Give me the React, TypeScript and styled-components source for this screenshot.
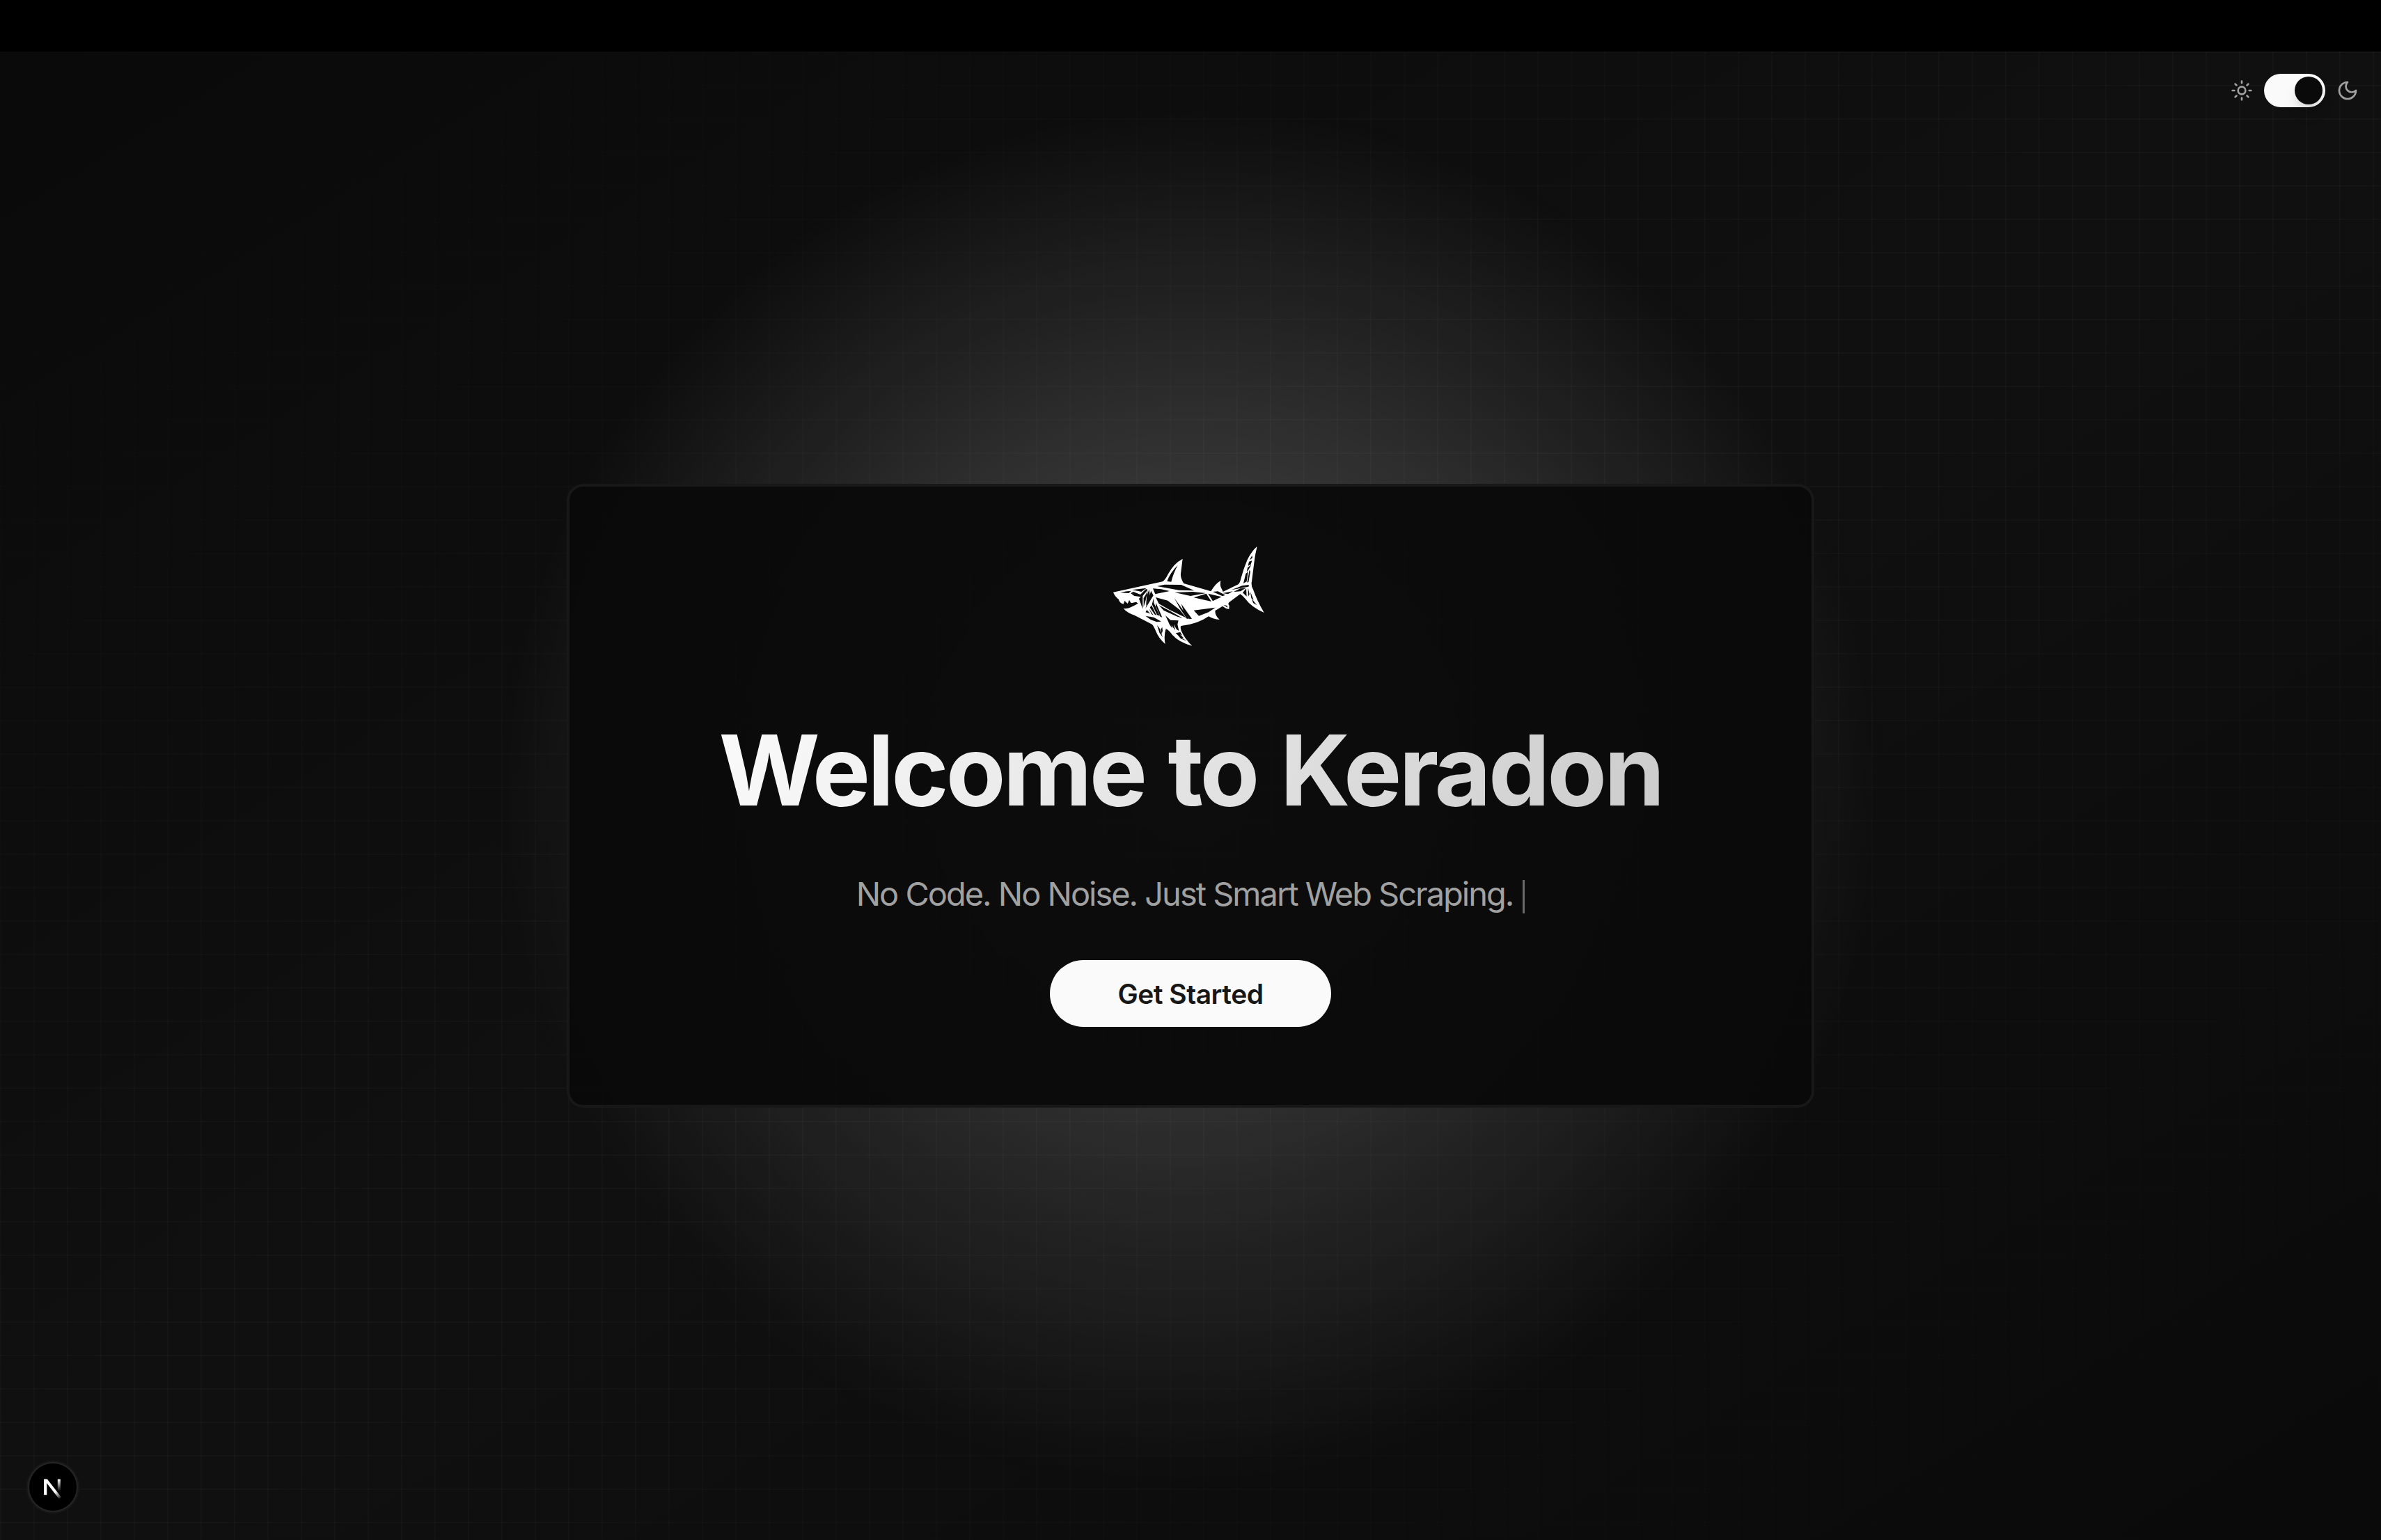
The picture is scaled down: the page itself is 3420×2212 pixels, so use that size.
import React, { useState } from "react";
import styled, { createGlobalStyle } from "styled-components";

const GlobalStyle = createGlobalStyle`
  * { box-sizing: border-box; }
  body { margin: 0; background: #0a0a0a; overflow: hidden; }
`;

const Page = styled.div`
  display: flex;
  flex-direction: column;
  width: 100vw;
  height: 100vh;
  font-family: Inter, "Liberation Sans", sans-serif;
  color: #fafafa;
`;

const TopStrip = styled.div`
  flex: 0 0 74px;
  background: #000;
`;

const Stage = styled.main`
  position: relative;
  flex: 1;
  display: grid;
  place-items: center;
  overflow: hidden;
  background: linear-gradient(to bottom right, #0a0a0a, #101010, #0a0a0a);
`;

const Glow = styled.div`
  position: absolute;
  left: calc(50% - 1000px);
  top: calc(50% - 1000px);
  width: 2000px;
  height: 2000px;
  border-radius: 50%;
  background: radial-gradient(circle closest-side, rgba(255, 255, 255, 0.29), rgba(255, 255, 255, 0));
  mask-image: linear-gradient(to bottom, #000 30%, rgba(0, 0, 0, 0.82) 72%);
`;

const Grid = styled.div`
  position: absolute;
  inset: 0;
  background-image:
    linear-gradient(to right, rgba(255, 255, 255, 0.022) 2px, transparent 2px),
    linear-gradient(to bottom, rgba(255, 255, 255, 0.022) 2px, transparent 2px);
  background-size: 48px 48px;
  mask-image: linear-gradient(to bottom right, transparent, #000, transparent);
`;

const Card = styled.section`
  position: relative;
  display: flex;
  flex-direction: column;
  align-items: center;
  width: 1792px;
  height: 896px;
  padding-top: 71px;
  border: 4px solid #181818;
  border-radius: 24px;
  background: rgba(10, 10, 10, 0.95);
`;

const Title = styled.h1`
  margin: 94px 0 0;
  font-size: 140px;
  line-height: 144px;
  font-weight: 700;
  letter-spacing: -3.9px;
  word-spacing: 4px;
  white-space: nowrap;
  color: transparent;
  background: linear-gradient(112deg, #fafafa, #cccccc);
  background-clip: text;
`;

const Tagline = styled.p`
  display: flex;
  align-items: flex-end;
  gap: 14px;
  margin: 78px 0 0;
  font-size: 47px;
  line-height: 56px;
  letter-spacing: -2.02px;
  white-space: nowrap;
  color: #a1a1a1;
`;

const Caret = styled.span`
  width: 3px;
  height: 48px;
  background: #6a6a6a;
`;

const StartButton = styled.button`
  width: 404px;
  height: 96px;
  margin-top: 67px;
  padding: 0;
  border: 0;
  border-radius: 48px;
  background: #fafafa;
  color: #171717;
  font-family: inherit;
  font-size: 39px;
  font-weight: 600;
  letter-spacing: -0.5px;
`;

const ThemeBar = styled.div`
  position: absolute;
  top: 32px;
  right: 32px;
  display: flex;
  align-items: center;
  gap: 16px;
  color: #a1a1a1;
`;

const Track = styled.button<{ $on: boolean }>`
  display: flex;
  justify-content: ${(p) => (p.$on ? "flex-end" : "flex-start")};
  width: 88px;
  height: 48px;
  padding: 4px;
  border: 0;
  border-radius: 24px;
  background: ${(p) => (p.$on ? "#fafafa" : "#262626")};
`;

const Thumb = styled.span`
  width: 40px;
  height: 40px;
  border-radius: 50%;
  background: #0a0a0a;
  box-shadow: 0 8px 12px -4px rgba(0, 0, 0, 0.1), 0 16px 24px -4px rgba(0, 0, 0, 0.1);
`;

const DevBadge = styled.div`
  position: absolute;
  left: 40px;
  bottom: 40px;
  width: 72px;
  height: 72px;
  border-radius: 50%;
  background: #000;
  border: 2px solid #242424;
  box-shadow: 0 0 0 2px #191919;

  svg { display: block; margin: -2px; }
`;

function SunIcon() {
  return (
    <svg width="32" height="32" viewBox="0 0 24 24" fill="none" stroke="currentColor" strokeWidth="2" strokeLinecap="round">
      <circle cx="12" cy="12" r="4" />
      <path d="M12 2v2M12 20v2M4.93 4.93l1.41 1.41M17.66 17.66l1.41 1.41M2 12h2M20 12h2M6.34 17.66l-1.41 1.41M19.07 4.93l-1.41 1.41" />
    </svg>
  );
}

function MoonIcon() {
  return (
    <svg width="32" height="32" viewBox="0 0 24 24" fill="none" stroke="currentColor" strokeWidth="2" strokeLinecap="round" strokeLinejoin="round">
      <path d="M12 3a6 6 0 0 0 9 9 9 9 0 1 1-9-9Z" />
    </svg>
  );
}

function NextMark() {
  return (
    <svg width="72" height="72" viewBox="0 0 72 72" fill="none" strokeWidth="4">
      <defs>
        <linearGradient id="diag" gradientUnits="userSpaceOnUse" x1="37" y1="39" x2="48" y2="53">
          <stop offset="0.25" stopColor="#fff" />
          <stop offset="1" stopColor="#fff" stopOpacity="0" />
        </linearGradient>
        <linearGradient id="stem" gradientUnits="userSpaceOnUse" x1="44" y1="25" x2="44" y2="42">
          <stop offset="0" stopColor="#fff" />
          <stop offset="1" stopColor="#fff" stopOpacity="0" />
        </linearGradient>
      </defs>
      <path d="M25.2 47.2V24.7" stroke="#fff" strokeWidth="4.2" />
      <path d="M23.1 24.7H28L48 50.6L44.8 53L23.1 25Z" fill="url(#diag)" />
      <path d="M44.8 24.7V41" stroke="url(#stem)" />
    </svg>
  );
}

function Shark() {
  return (
    <svg width="260" height="170" viewBox="0 0 780 510">
      {/* silhouette */}
      <path
        fill="#fff"
        d="M57 242 L270 196 Q282 188 294 163 Q318 118 356 98 Q352 130 348 162 Q346 180 361 204
           L478 238 Q496 206 520 192 Q517 206 520 218 L530 240 L596 208 Q604 200 608 180
           Q618 142 634 104 Q652 66 677 44 Q668 80 664 116 L654 196 Q650 212 660 230
           Q676 276 707 330 Q652 306 626 270 Q614 256 604 250 L556 286 Q550 292 557 300 L556 315
           Q540 312 528 302 L496 322 Q496 344 515 360 Q488 358 468 346
           Q420 380 349 387 Q345 392 350 408 Q366 444 397 473 Q340 458 312 426 Q296 404 284 400
           Q274 430 281 465 Q252 440 240 408 Q232 388 224 380
           L150 342 Q116 330 101 312 Q122 314 134 306 Q152 298 164 290
           L156 284 L134 289 L126 276 L119 291 L106 279 L101 293 Q84 288 80 272 Q64 260 57 242Z"
      />
      {/* carved facets */}
      <g fill="#0c0c0c">
        <path d="M289 195 Q302 158 335 126 Q316 160 307 197Z" />
        <path d="M88 244 Q110 236 134 236 L124 246Z" />
        <path d="M138 232 L200 224 L178 240 L162 236 Z" />
        <path d="M132 246 L144 240 L174 252 L198 228 L206 232 L184 258 L184 314 L176 292 L168 270 L176 262 L148 258Z" />
        <path d="M188 268 L206 236 L196 280 L188 306Z" />
        <path d="M212 230 L216 262 L198 300 L202 256Z" />
        <path d="M220 236 L230 256 L214 282 L196 312Z" />
        <path d="M246 216 L278 209 L350 210 L406 235 L340 233Z" />
        <path d="M228 226 L264 229 L300 237 L238 250Z" />
        <path d="M322 243 L400 240 L456 246 L390 258Z" />
        <path d="M404 265 L458 248 L480 282Z" />
        <path d="M466 248 L524 262 L486 280Z" />
        <path d="M486 240 L508 238 L540 254 L528 259Z" />
        <path d="M528 246 L572 238 L552 250Z" />
        <path d="M566 232 L612 214 L642 210 L640 218Z" />
        <path d="M576 240 L604 226 L628 224 L606 238Z" />
        <path d="M240 264 L292 278 L344 318 L370 352 L300 318 L254 292Z" />
        <path d="M254 298 L300 322 L356 354 L330 346 L274 320Z" />
        <path d="M320 266 L384 356 L374 356 L346 314Z" />
        <path d="M350 292 L396 356 L386 358 L362 332Z" />
        <path d="M404 320 L497 308 L468 328 L426 344Z" />
        <path d="M231 268 L232 288 L258 344 L246 340 L224 294Z" />
        <path d="M222 298 L244 342 L236 338 L215 308Z" />
        <path d="M211 312 L231 342 L222 336Z" />
        <path d="M202 318 L216 334 L196 328Z" />
        <path d="M241 288 L268 350 L260 347 L240 302Z" />
        <path d="M196 344 L232 350 L264 368 L244 370 L218 360Z" />
        <path d="M282 342 L304 362 L338 364 L334 380 L340 408 L330 402 L318 380 L324 406 L308 384 L312 398 L300 382Z" />
        <path d="M246 384 L258 400 L270 436 L256 416Z" />
        <path d="M268 392 L270 408 L266 422 L262 402Z" />
        <path d="M326 418 L346 414 L354 428 L344 424 L360 438 L352 438 L374 452 L348 442 L338 430Z" />
        <path d="M655 84 L657 94 L644 104Z" />
        <path d="M642 110 L655 106 L650 122 L638 128Z" />
        <path d="M636 136 L652 124 L642 142 L632 156Z" />
        <path d="M644 146 L648 152 L640 198 L634 200Z" />
        <path d="M628 162 L638 154 L632 196 L618 204Z" />
        <path d="M532 296 L548 300 L550 308Z" />
        <path d="M615 244 L630 226 L632 260Z" />
        <path d="M638 222 L644 250 L638 262Z" />
        <path d="M648 240 L662 276 L652 268Z" />
        <path d="M654 270 L676 298 L660 288Z" />
      </g>
    </svg>
  );
}

export default function App() {
  const [dark, setDark] = useState(true);
  return (
    <Page>
      <GlobalStyle />
      <TopStrip />
      <Stage>
        <Glow />
        <Grid />
        <ThemeBar>
          <SunIcon />
          <Track $on={dark} onClick={() => setDark(!dark)} aria-label="Toggle theme">
            <Thumb />
          </Track>
          <MoonIcon />
        </ThemeBar>
        <Card>
          <Shark />
          <Title>Welcome to Keradon</Title>
          <Tagline>
            No Code. No Noise. Just Smart Web Scraping.
            <Caret />
          </Tagline>
          <StartButton>Get Started</StartButton>
        </Card>
        <DevBadge>
          <NextMark />
        </DevBadge>
      </Stage>
    </Page>
  );
}
